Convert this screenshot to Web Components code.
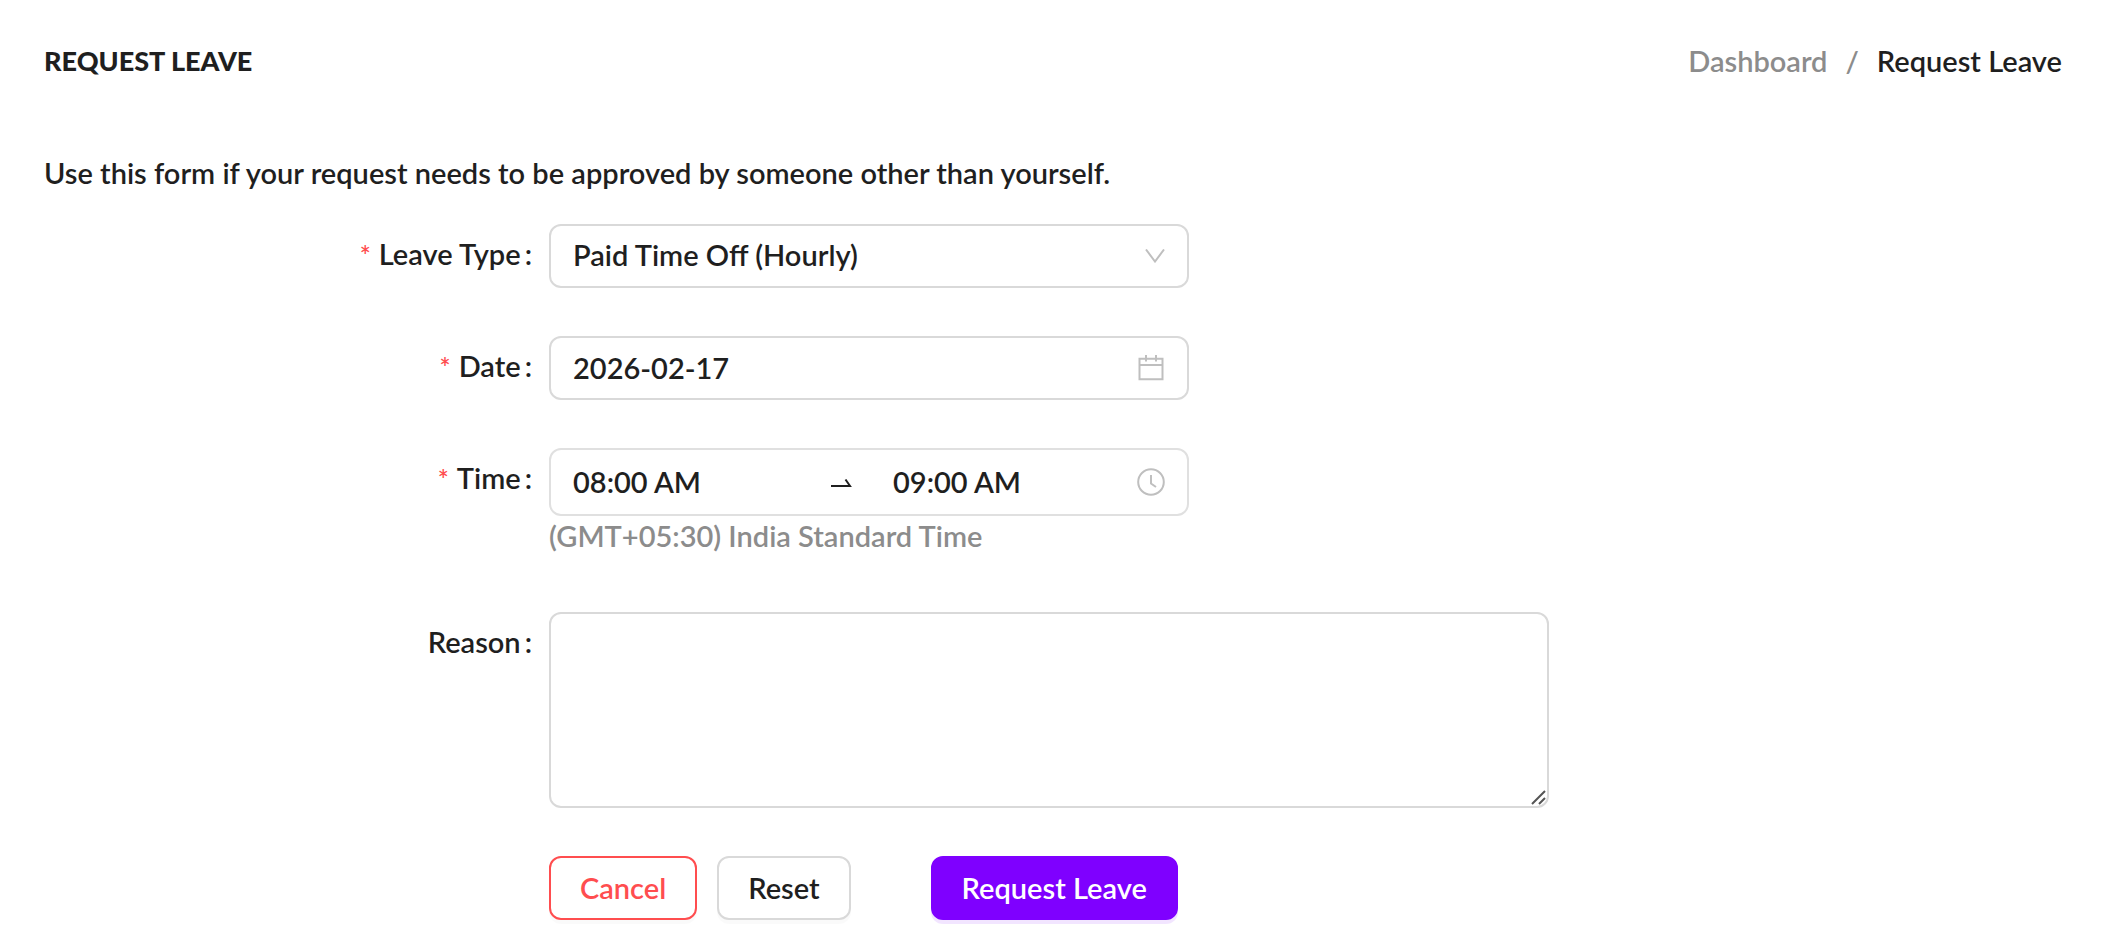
<!DOCTYPE html>
<html lang="en">
<head>
<meta charset="utf-8">
<meta name="viewport" content="width=device-width, initial-scale=1">
<title>Request Leave</title>
<style>
  body {
    margin: 0;
    background: #ffffff;
    color: #1f1f1f;
    font: 600 29px/44px Lato, "Open Sans", sans-serif;
    --border: #d9d9d9;
    --muted: #8c8c8c;
    --icon: #bfbfbf;
    --danger: #ff4d4f;
    --primary: #7f00ff;
  }
</style>
</head>
<body>

<leave-page></leave-page>

<script>
// styles shared by every form field
const fieldStyles = `
  :host {
    display: grid;
    grid-template-columns: 1fr 3fr;
    align-items: start;
  }
  label {
    display: block;
    padding: 8px 17px 8px 0;
    text-align: right;
  }
  .colon {
    margin-left: 4px;
  }
  .required {
    margin-right: 8px;
    color: var(--danger);
    font-size: 26px;
    line-height: 1;
  }
  .control {
    display: grid;
    align-items: center;
    max-width: 640px;
  }
  .control > * {
    grid-row: 1;
    grid-column: 1;
  }
  input, select, textarea {
    box-sizing: border-box;
    width: 100%;
    min-width: 0;
    margin: 0;
    border: 2px solid var(--border);
    border-radius: 12px;
    padding: 6px 22px 8px;
    background: #ffffff;
    color: inherit;
    font: inherit;
    outline: none;
  }
  input, select {
    height: 64px;
  }
  svg {
    display: block;
    fill: none;
    stroke: var(--icon);
    stroke-width: 2;
  }
  .control > svg {
    justify-self: end;
    margin-right: 24px;
    pointer-events: none;
  }
`;

const icons = {
  down: `<svg width="20" height="14" viewBox="0 0 20 14"><path d="M1 0.500L10 12.500L19 0.500"/></svg>`,
  calendar: `<svg width="28" height="28" viewBox="0 0 28 28"><path d="M2.500 4.700H25.500V25.300H2.500ZM2.500 11H25.500M9 1V7.500M19 1V7.500"/></svg>`,
  clock: `<svg width="28" height="28" viewBox="0 0 28 28"><circle cx="14" cy="14" r="12.800"/><path d="M14 7V15.500L19 19"/></svg>`,
  arrow: `<svg width="24" height="16" viewBox="0 0 24 16"><path d="M2 12H21L16.500 5.500"/></svg>`
};

// label in the left column, the control of the subclass in the right one
class FormField extends HTMLElement {
  constructor() {
    super();
    this.attachShadow({ mode: 'open' });
  }

  get mark() {
    return this.hasAttribute('required') ? '<span class="required">*</span>' : '';
  }

  get labelHtml() {
    return `<label for="control">${this.mark}${this.getAttribute('label')}<span class="colon">:</span></label>`;
  }

  connectedCallback() {
    this.shadowRoot.innerHTML = `<style>${fieldStyles}</style>${this.labelHtml}${this.controlHtml()}`;
  }
}

class SelectField extends FormField {
  controlHtml() {
    return `
      <style>select { appearance: none; }</style>
      <div class="control">
        <select id="control"><option>${this.getAttribute('value')}</option></select>
        ${icons.down}
      </div>
    `;
  }
}

class DateField extends FormField {
  controlHtml() {
    return `
      <div class="control">
        <input id="control" type="text" value="${this.getAttribute('value')}">
        ${icons.calendar}
      </div>
    `;
  }
}

class TimeRangeField extends FormField {
  controlHtml() {
    return `
      <style>
        .range {
          display: flex;
          align-items: center;
          box-sizing: border-box;
          max-width: 640px;
          height: 68px;
          padding: 0 22px;
          border: 2px solid #e0e0e0;
          border-radius: 12px;
        }
        .range input {
          flex: 1;
          height: 60px;
          border: none;
          padding: 0 0 2px;
        }
        .arrow {
          padding: 0 40px 0 16px;
        }
        .arrow svg {
          stroke: #1f1f1f;
        }
        .range > svg {
          margin-left: 4px;
        }
        .help {
          padding-bottom: 8px;
          color: var(--muted);
          line-height: 40px;
        }
      </style>
      <div>
        <div class="range">
          <input id="control" type="text" value="${this.getAttribute('start')}">
          <span class="arrow">${icons.arrow}</span>
          <input type="text" aria-label="End time" value="${this.getAttribute('end')}">
          ${icons.clock}
        </div>
        <div class="help"><slot></slot></div>
      </div>
    `;
  }
}

class TextareaField extends FormField {
  controlHtml() {
    return `
      <style>
        .control {
          position: relative;
          max-width: 1000px;
        }
        textarea {
          display: block;
          height: 196px;
          resize: vertical;
        }
        textarea::-webkit-resizer {
          background: transparent;
        }
        .control > .grip {
          position: absolute;
          right: 3px;
          bottom: 3px;
          margin: 0;
          stroke: #555555;
        }
      </style>
      <div class="control">
        <textarea id="control"></textarea>
        <svg class="grip" width="16" height="16" viewBox="0 0 16 16"><path d="M2 15L15 2M9 15L15 9"/></svg>
      </div>
    `;
  }
}

class ActionButton extends HTMLElement {
  constructor() {
    super();
    this.attachShadow({ mode: 'open' });
    this.shadowRoot.innerHTML = `
      <style>
        :host {
          display: block;
        }
        button {
          display: block;
          height: 64px;
          padding: 0 29px;
          border: 2px solid var(--border);
          border-radius: 12px;
          background: #ffffff;
          color: #1f1f1f;
          font: inherit;
          white-space: nowrap;
          box-shadow: 0 4px 0 rgba(0, 0, 0, 0.02);
          cursor: pointer;
        }
        :host([kind="danger"]) button {
          border-color: var(--danger);
          color: var(--danger);
        }
        :host([kind="primary"]) button {
          border-color: var(--primary);
          background: var(--primary);
          color: #ffffff;
          box-shadow: 0 4px 0 rgba(127, 0, 255, 0.1);
        }
      </style>
      <button type="button"><slot></slot></button>
    `;
  }
}

class PageHeader extends HTMLElement {
  constructor() {
    super();
    this.attachShadow({ mode: 'open' });
    this.shadowRoot.innerHTML = `
      <style>
        :host {
          display: flex;
          justify-content: space-between;
          align-items: center;
          padding-right: 2px;
        }
        h1 {
          margin: 0;
          font-size: 27px;
          font-weight: 900;
        }
        nav {
          display: flex;
          gap: 18px;
          color: var(--muted);
        }
        a {
          color: inherit;
          text-decoration: none;
        }
        .current {
          color: #1f1f1f;
        }
      </style>
      <h1><slot></slot></h1>
      <nav aria-label="Breadcrumb">
        <a href="#">Dashboard</a>
        <span>/</span>
        <span class="current">Request Leave</span>
      </nav>
    `;
  }
}

class LeavePage extends HTMLElement {
  constructor() {
    super();
    this.attachShadow({ mode: 'open' });
    this.shadowRoot.innerHTML = `
      <style>
        :host {
          display: block;
          padding: 39px 38px 22px 44px;
        }
        p {
          margin: 68px 0 29px;
        }
        form {
          display: flex;
          flex-direction: column;
          gap: 48px;
        }
        .actions {
          display: grid;
          grid-template-columns: 1fr 3fr;
        }
        .buttons {
          grid-column: 2;
          display: flex;
          gap: 20px;
        }
        .submit {
          margin-left: 60px;
        }
      </style>
      <page-header>REQUEST LEAVE</page-header>
      <p>Use this form if your request needs to be approved by someone other than yourself.</p>
      <form>
        <select-field label="Leave Type" value="Paid Time Off (Hourly)" required></select-field>
        <date-field label="Date" value="2026-02-17" required></date-field>
        <time-range-field label="Time" start="08:00 AM" end="09:00 AM" required>(GMT+05:30) India Standard Time</time-range-field>
        <textarea-field label="Reason"></textarea-field>
        <div class="actions">
          <div class="buttons">
            <action-button kind="danger">Cancel</action-button>
            <action-button>Reset</action-button>
            <action-button class="submit" kind="primary">Request Leave</action-button>
          </div>
        </div>
      </form>
    `;
  }
}

customElements.define('select-field', SelectField);
customElements.define('date-field', DateField);
customElements.define('time-range-field', TimeRangeField);
customElements.define('textarea-field', TextareaField);
customElements.define('action-button', ActionButton);
customElements.define('page-header', PageHeader);
customElements.define('leave-page', LeavePage);
</script>
</body>
</html>
